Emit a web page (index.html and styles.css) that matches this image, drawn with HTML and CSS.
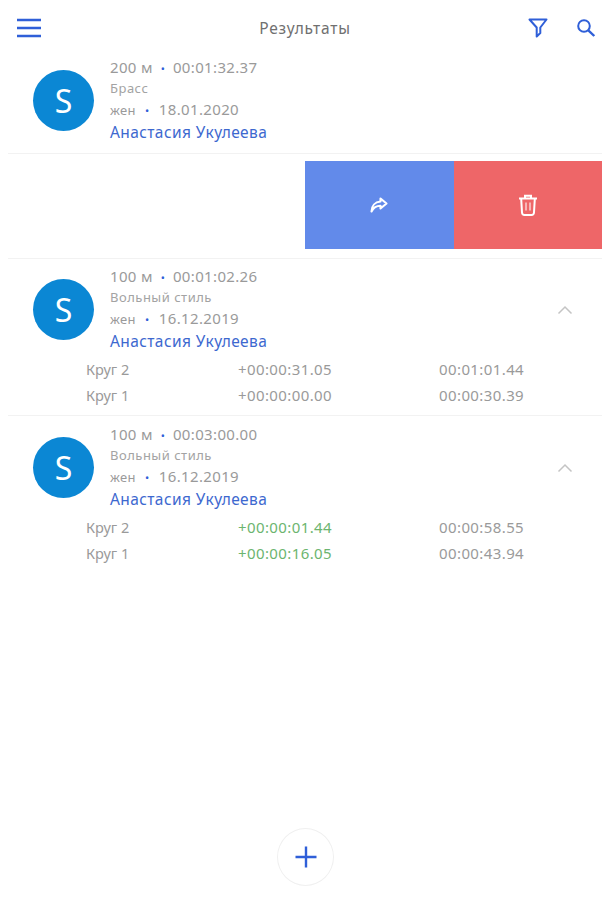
FILE: index.html
```html
<!DOCTYPE html>
<html lang="ru">
<head>
    <meta charset="UTF-8">
    <meta name="viewport" content="width=device-width, initial-scale=1.0">
    <title>Результаты</title>
    <link rel="stylesheet" href="styles.css">
</head>
<body>
<div class="app">
    <header class="topbar">
        <button class="icon-button menu-button" aria-label="Меню">
            <svg width="26" height="20" viewBox="0 0 26 20"><path d="M1 2h24M1 10h24M1 18h24" fill="none" stroke="#2f5fd8" stroke-width="2.6"/></svg>
        </button>
        <h1 class="title">Результаты</h1>
        <div class="topbar-actions">
            <button class="icon-button" aria-label="Фильтр">
                <svg width="20" height="20" viewBox="0 0 20 20"><path d="M1.5 1.5h17l-6.2 8v5.500l-3.600 3.500v-9z" fill="none" stroke="#2f5fd8" stroke-width="2" stroke-linejoin="round"/></svg>
            </button>
            <button class="icon-button" aria-label="Поиск">
                <svg width="20" height="20" viewBox="0 0 20 20"><circle cx="8" cy="8" r="5.800" fill="none" stroke="#2f5fd8" stroke-width="2"/><path d="M12.300 12.300l6 5.700" fill="none" stroke="#2f5fd8" stroke-width="2.400"/></svg>
            </button>
        </div>
    </header>

    <section class="result result-first">
        <div class="result-head">
            <div class="avatar">S</div>
            <div class="info">
                <p class="line line-distance">200 м <span class="dot">•</span> 00:01:32.37</p>
                <p class="stroke-name">Брасс</p>
                <p class="line"><span class="gender">жен</span> <span class="dot">•</span> 18.01.2020</p>
                <p class="athlete">Анастасия Укулеева</p>
            </div>
        </div>
    </section>

    <section class="swipe-actions">
        <button class="action action-share" aria-label="Поделиться">
            <svg width="18" height="16" viewBox="0 0 18 16"><path d="M10.500 1.500l6 5-6 5V8.800C6.500 8.800 3.500 10.500 1.500 14.500c0-5.500 3.500-9.500 9-10z" fill="none" stroke="#fff" stroke-width="2.100" stroke-linejoin="round"/></svg>
        </button>
        <button class="action action-delete" aria-label="Удалить">
            <svg width="20" height="22" viewBox="0 0 20 22"><path d="M1 4.500h18M7 4V1.800h6V4M3.200 5l.8 13.500c.1 1.500 1 2.500 2.500 2.500h7c1.500 0 2.400-1 2.500-2.500L16.800 5" fill="none" stroke="#fff" stroke-width="2"/><path d="M8 8.500v8M12 8.500v8" fill="none" stroke="#fff" stroke-width="1.500" opacity="0.700"/></svg>
        </button>
    </section>

    <section class="result result-open">
        <div class="result-head">
            <div class="avatar">S</div>
            <div class="info">
                <p class="line line-distance">100 м <span class="dot">•</span> 00:01:02.26</p>
                <p class="stroke-name">Вольный стиль</p>
                <p class="line"><span class="gender">жен</span> <span class="dot">•</span> 16.12.2019</p>
                <p class="athlete">Анастасия Укулеева</p>
            </div>
            <svg class="chevron" width="16" height="10" viewBox="0 0 16 10"><path d="M1.500 8.500L8 2l6.500 6.500" fill="none" stroke="#c4c4c4" stroke-width="1.500"/></svg>
        </div>
        <div class="laps">
            <div class="lap"><span class="lap-name">Круг 2</span><span>+00:00:31.05</span><span>00:01:01.44</span></div>
            <div class="lap"><span class="lap-name">Круг 1</span><span>+00:00:00.00</span><span>00:00:30.39</span></div>
        </div>
    </section>

    <section class="result result-open result-last">
        <div class="result-head">
            <div class="avatar">S</div>
            <div class="info">
                <p class="line line-distance">100 м <span class="dot">•</span> 00:03:00.00</p>
                <p class="stroke-name">Вольный стиль</p>
                <p class="line"><span class="gender">жен</span> <span class="dot">•</span> 16.12.2019</p>
                <p class="athlete">Анастасия Укулеева</p>
            </div>
            <svg class="chevron" width="16" height="10" viewBox="0 0 16 10"><path d="M1.500 8.500L8 2l6.500 6.500" fill="none" stroke="#c4c4c4" stroke-width="1.500"/></svg>
        </div>
        <div class="laps">
            <div class="lap"><span class="lap-name">Круг 2</span><span class="gain">+00:00:01.44</span><span>00:00:58.55</span></div>
            <div class="lap"><span class="lap-name">Круг 1</span><span class="gain">+00:00:16.05</span><span>00:00:43.94</span></div>
        </div>
    </section>

    <button class="add-button" aria-label="Добавить">
        <svg width="22" height="22" viewBox="0 0 22 22"><path d="M11 0.500v21M0.500 11h21" fill="none" stroke="#2f5fd8" stroke-width="2.400"/></svg>
    </button>
</div>
</body>
</html>
```

FILE: styles.css
```css
* {
    box-sizing: border-box;
}

body {
    margin: 0;
    background-color: #fff;
    font-family: 'Noto Sans', sans-serif;
    color: #999;
}

p {
    margin: 0;
}

button {
    border: none;
    background: none;
    padding: 0;
    cursor: pointer;
}

.app {
    position: relative;
    width: 610px;
    height: 900px;
    overflow: hidden;
}

.topbar {
    position: relative;
    height: 56px;
    display: flex;
    align-items: center;
    justify-content: space-between;
    padding: 0 14px 1px 16px;
}

.icon-button {
    display: flex;
}

.title {
    position: absolute;
    left: 0;
    right: 0;
    margin: 0;
    text-align: center;
    font-size: 15.500px;
    font-weight: 400;
    letter-spacing: 0.8px;
    color: #707070;
    pointer-events: none;
}

.topbar-actions {
    display: flex;
    gap: 28px;
}

.result {
    margin: 0 8px;
    border-bottom: 1px solid #f2f2f2;
}

.result-first {
    padding-bottom: 8px;
}

.result-head {
    display: flex;
    align-items: center;
    padding-left: 25px;
}

.avatar {
    width: 61px;
    height: 61px;
    border-radius: 50%;
    background-color: #0b87d4;
    color: #fff;
    font-size: 32px;
    display: flex;
    align-items: center;
    justify-content: center;
    margin-right: 16px;
    flex-shrink: 0;
}

.info {
    display: flex;
    flex-direction: column;
}

.line {
    font-size: 15px;
    line-height: 21px;
    letter-spacing: 0.35px;
    color: #9a9a9a;
}

.line-distance {
    line-height: 22px;
}

.stroke-name {
    font-size: 13px;
    line-height: 21px;
    letter-spacing: 0.5px;
    color: #a3a3a3;
}

.gender {
    font-size: 13px;
    line-height: 1;
}

.dot {
    color: #2f5fd8;
    font-size: 11px;
    line-height: 1;
    margin: 0 5px;
}

.line-distance .dot {
    margin: 0 3.500px;
}

.athlete {
    font-size: 15.500px;
    line-height: 25px;
    letter-spacing: 0.4px;
    color: #3d68cf;
}

.chevron {
    margin-left: auto;
    margin-right: 29px;
}

.swipe-actions {
    display: flex;
    justify-content: flex-end;
    margin: 7px 8px 9px 0;
}

.action {
    width: 148.500px;
    height: 88px;
    display: flex;
    align-items: center;
    justify-content: center;
}

.action-share {
    background-color: #628aea;
}

.action-delete {
    background-color: #ee6668;
}

.result-open {
    border-top: 1px solid #f2f2f2;
    padding-top: 6px;
}

.result-open + .result-open {
    border-top: 0;
    padding-top: 7px;
}

.result-last {
    border-bottom: 0;
}

.laps {
    padding: 2px 0 7px 78px;
}

.lap {
    display: grid;
    grid-template-columns: 152px 201px auto;
    font-size: 15px;
    line-height: 26px;
    letter-spacing: 0.4px;
    color: #9a9a9a;
}

.lap-name {
    font-size: 14.500px;
    letter-spacing: 0;
}

.gain {
    color: #6cb56f;
}

.add-button {
    position: absolute;
    left: 277px;
    top: 828px;
    width: 57px;
    height: 58px;
    border-radius: 50%;
    border: 1px solid #f0f0f0;
    background-color: #fff;
    display: flex;
    align-items: center;
    justify-content: center;
}
```
